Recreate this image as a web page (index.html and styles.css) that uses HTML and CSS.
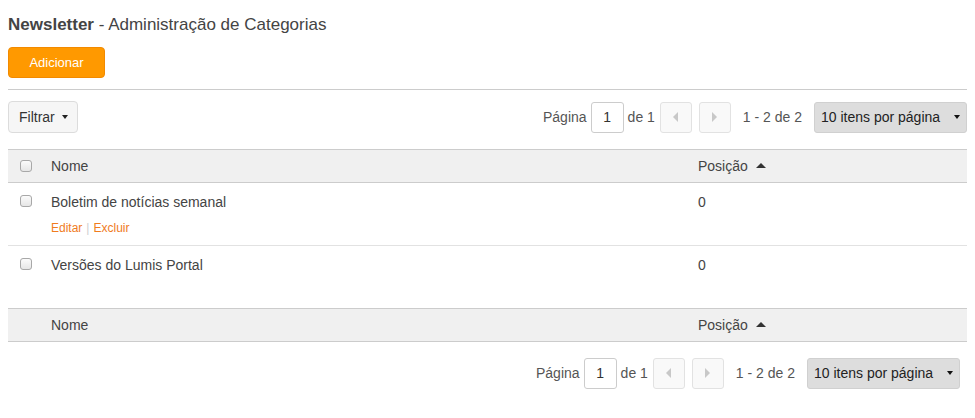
FILE: index.html
```html
<!DOCTYPE html>
<html lang="pt">
<head>
<meta charset="utf-8">
<title>Newsletter - Administração de Categorias</title>
<link rel="stylesheet" href="styles.css">
</head>
<body>
<div class="page">
  <h1 class="title"><b>Newsletter</b> - Administração de Categorias</h1>
  <div class="actions"><button class="btn-add">Adicionar</button></div>
  <hr class="sep">
  <div class="toolbar">
    <button class="btn-filter">Filtrar<span class="caret"></span></button>
    <div class="pager">
      <span>Página</span>
      <span class="page-input">1</span>
      <span>de 1</span>
      <span class="nav-btn"><span class="tri-left"></span></span>
      <span class="nav-btn"><span class="tri-right"></span></span>
      <span class="range">1 - 2 de 2</span>
      <span class="per-page">10 itens por página <span class="caret"></span></span>
    </div>
  </div>
  <table class="grid">
    <thead>
      <tr class="head">
        <th class="c-check"><span class="cb"></span></th>
        <th class="c-name">Nome</th>
        <th class="c-pos">Posição <span class="sort-up"></span></th>
      </tr>
    </thead>
    <tbody>
      <tr class="row first">
        <td class="c-check"><span class="cb"></span></td>
        <td class="c-name">Boletim de notícias semanal
          <div class="row-links"><a>Editar</a><span class="bar">|</span><a>Excluir</a></div>
        </td>
        <td class="c-pos">0</td>
      </tr>
      <tr class="row">
        <td class="c-check"><span class="cb"></span></td>
        <td class="c-name">Versões do Lumis Portal</td>
        <td class="c-pos">0</td>
      </tr>
    </tbody>
    <tfoot>
      <tr class="head">
        <th class="c-check"></th>
        <th class="c-name">Nome</th>
        <th class="c-pos">Posição <span class="sort-up"></span></th>
      </tr>
    </tfoot>
  </table>
  <div class="toolbar bottom">
    <div class="pager">
      <span>Página</span>
      <span class="page-input">1</span>
      <span>de 1</span>
      <span class="nav-btn"><span class="tri-left"></span></span>
      <span class="nav-btn"><span class="tri-right"></span></span>
      <span class="range">1 - 2 de 2</span>
      <span class="per-page">10 itens por página <span class="caret"></span></span>
    </div>
  </div>
</div>
</body>
</html>
```
FILE: styles.css
```css
html, body {
  margin: 0;
  padding: 0;
  background: #fff;
}
body {
  font-family: "Liberation Sans", Arial, sans-serif;
  color: #444;
  font-size: 14px;
}
.page {
  padding: 0 8px;
}
.title {
  margin: 0;
  padding-top: 14px;
  font-size: 17px;
  font-weight: normal;
  line-height: 21px;
  color: #444;
}
.title b {
  font-weight: bold;
}
.actions {
  margin-top: 12px;
}
.btn-add {
  display: block;
  width: 97px;
  height: 31px;
  background: #ff9900;
  border: 1px solid #f28a00;
  border-radius: 4px;
  color: #fff;
  font-family: "Liberation Sans", Arial, sans-serif;
  font-size: 13px;
  padding: 0;
}
.sep {
  margin: 11px 0 0;
  border: 0;
  border-top: 1px solid #cccccc;
  height: 0;
}
.toolbar {
  display: flex;
  justify-content: space-between;
  align-items: center;
  margin-top: 11px;
  height: 32px;
}
.toolbar.bottom {
  justify-content: flex-end;
  margin-top: 15px;
  padding-right: 7px;
}
.btn-filter {
  height: 32px;
  width: 70px;
  background: #f6f6f6;
  border: 1px solid #dcdcdc;
  border-radius: 4px;
  font-family: "Liberation Sans", Arial, sans-serif;
  font-size: 14px;
  color: #333;
  text-align: left;
  padding: 0 0 0 10px;
}
.caret {
  display: inline-block;
  width: 0;
  height: 0;
  border-left: 3px solid transparent;
  border-right: 3px solid transparent;
  border-top: 4px solid #222;
  vertical-align: middle;
  margin-left: 6px;
  margin-top: -2px;
}
.btn-filter .caret {
  margin-left: 7px;
}
.pager {
  display: flex;
  align-items: center;
  color: #555;
  font-size: 14px;
}
.page-input {
  box-sizing: border-box;
  width: 33px;
  height: 31px;
  border: 1px solid #ccc;
  border-radius: 3px;
  display: flex;
  align-items: center;
  justify-content: center;
  color: #333;
  margin: 0 4px;
}
.nav-btn {
  box-sizing: border-box;
  width: 32px;
  height: 31px;
  border: 1px solid #e2e2e2;
  border-radius: 3px;
  background: #f9f9f9;
  display: flex;
  align-items: center;
  justify-content: center;
  margin-left: 5px;
}
.nav-btn + .nav-btn {
  margin-left: 7px;
}
.tri-left {
  width: 0;
  height: 0;
  border-top: 5px solid transparent;
  border-bottom: 5px solid transparent;
  border-right: 5px solid #c8c8c8;
}
.tri-right {
  width: 0;
  height: 0;
  border-top: 5px solid transparent;
  border-bottom: 5px solid transparent;
  border-left: 5px solid #c8c8c8;
}
.range {
  margin-left: 12px;
  margin-right: 12px;
}
.per-page {
  box-sizing: border-box;
  width: 153px;
  height: 31px;
  background: #dddddd;
  border: 1px solid #d0d0d0;
  border-radius: 3px;
  display: flex;
  align-items: center;
  justify-content: space-between;
  padding: 0 6px;
  color: #222;
}
.per-page .caret {
  border-top-color: #111;
  margin-top: 0;
}
.grid {
  width: 100%;
  border-collapse: collapse;
  margin-top: 16px;
  font-size: 14px;
  color: #444;
}
.grid th {
  font-weight: normal;
  text-align: left;
}
.head {
  background: #f0f0f0;
  border-top: 1px solid #cccccc;
  border-bottom: 1px solid #cccccc;
}
.grid .head th {
  height: 32px;
  vertical-align: middle;
}
.grid .c-check {
  width: 43px;
  padding: 0 0 0 12px;
  box-sizing: border-box;
}
.grid .c-name {
  width: 647px;
  padding: 0;
}
.grid .c-pos {
  padding: 0;
}
.grid .row td {
  height: 63px;
  vertical-align: top;
  padding-top: 11px;
  box-sizing: border-box;
}
.row.first {
  border-bottom: 1px solid #e2e2e2;
}
.grid .row td.c-check {
  padding-top: 12px;
  padding-left: 12px;
}
.cb {
  display: block;
  box-sizing: border-box;
  width: 12px;
  height: 12px;
  border: 1px solid #a8a8a8;
  border-radius: 3px;
  background: linear-gradient(#fbfbfb, #e6e6e6);
}
.row-links {
  margin-top: 11px;
  font-size: 12px;
  line-height: 14px;
}
.row-links a {
  color: #f07c1e;
}
.row-links .bar {
  color: #cfcfcf;
  margin: 0 4px;
}
.sort-up {
  display: inline-block;
  width: 0;
  height: 0;
  border-left: 5px solid transparent;
  border-right: 5px solid transparent;
  border-bottom: 5px solid #333;
  vertical-align: middle;
  margin-left: 4px;
  margin-top: -3px;
}
```
